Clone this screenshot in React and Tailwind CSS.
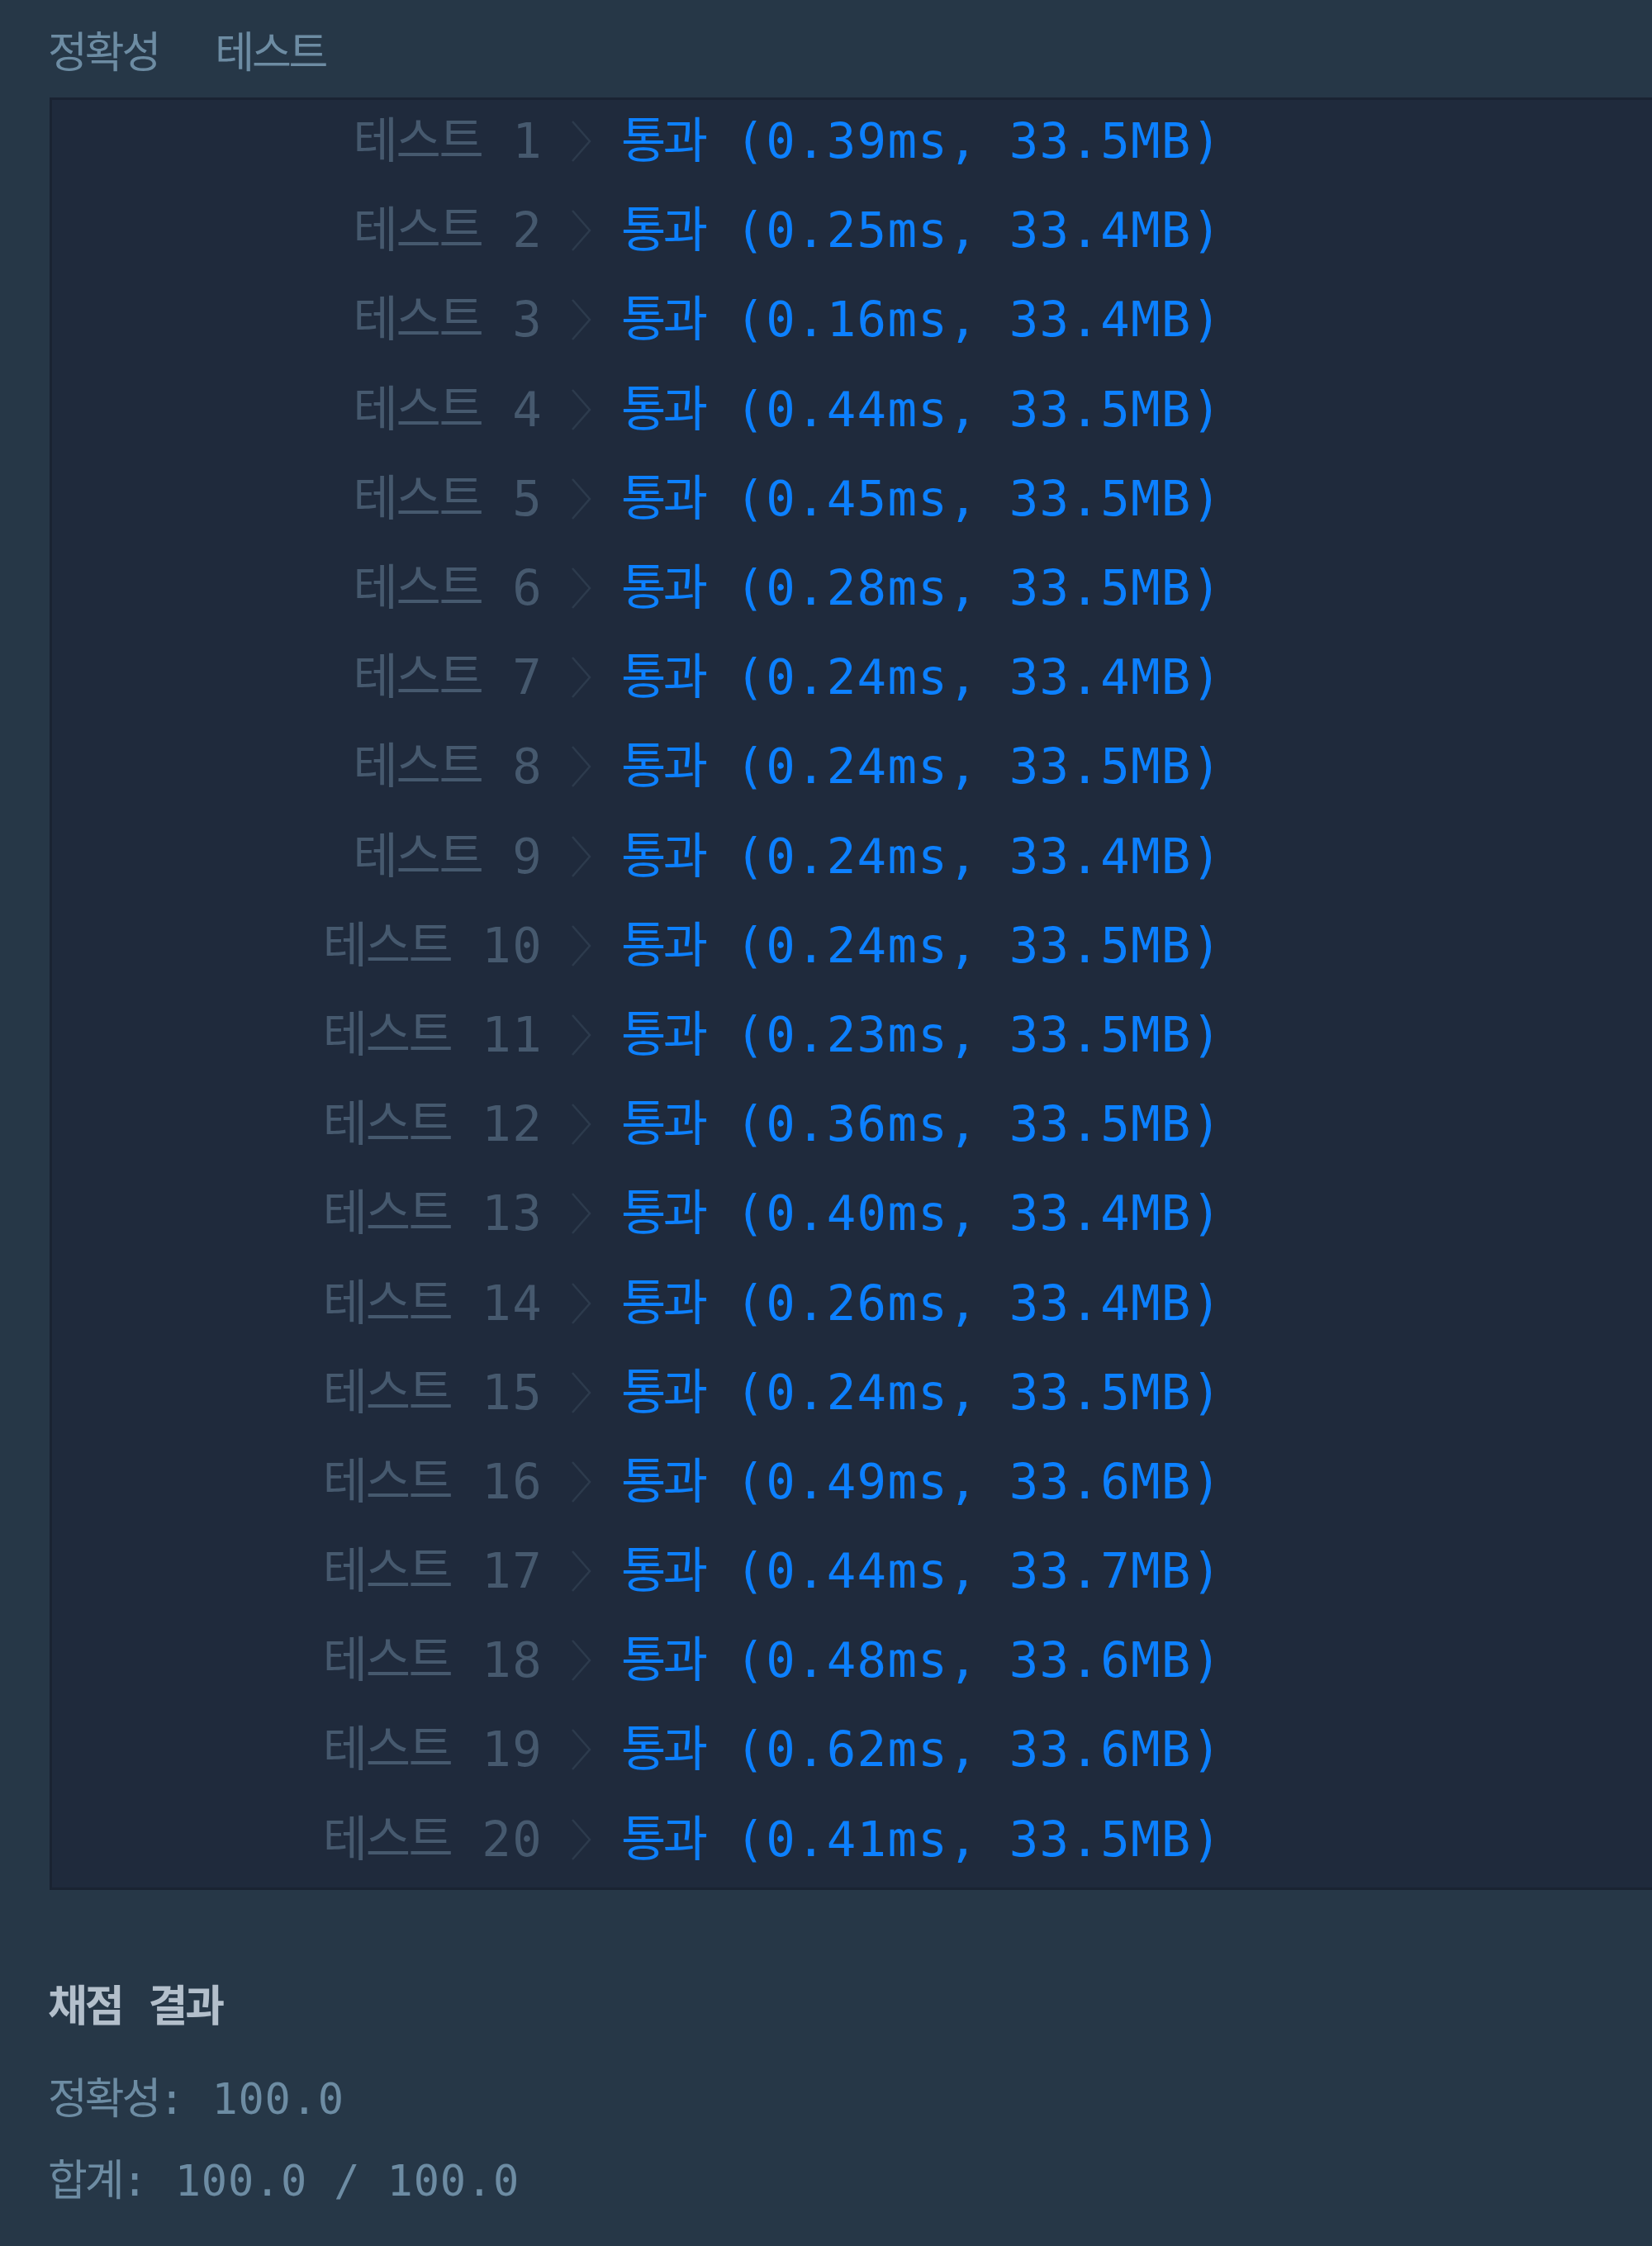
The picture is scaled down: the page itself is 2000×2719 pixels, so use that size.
const results = [
  ['0.39', '33.5'], ['0.25', '33.4'], ['0.16', '33.4'], ['0.44', '33.5'],
  ['0.45', '33.5'], ['0.28', '33.5'], ['0.24', '33.4'], ['0.24', '33.5'],
  ['0.24', '33.4'], ['0.24', '33.5'], ['0.23', '33.5'], ['0.36', '33.5'],
  ['0.40', '33.4'], ['0.26', '33.4'], ['0.24', '33.5'], ['0.49', '33.6'],
  ['0.44', '33.7'], ['0.48', '33.6'], ['0.62', '33.6'], ['0.41', '33.5'],
];

// hangul comes from the CJK fallback, which runs wider than the reference
function Ko({ children, className = 'tracking-[-0.06em]' }) {
  return <span className={className}>{children}</span>;
}

function Chevron() {
  return (
    <svg width="26" height="52" viewBox="0 0 26 52" className="shrink-0 ml-[34px]">
      <polyline points="2,2 23,26 2,50" fill="none" stroke="#2d3b4d" strokeWidth="2.5" strokeLinejoin="miter" />
    </svg>
  );
}

export default function App() {
  return (
    <div
      className="min-h-screen w-full overflow-hidden bg-[#263747] pb-[60px]"
      style={{ fontFamily: '"DejaVu Sans Mono", "Noto Sans CJK KR", monospace' }}
    >
      {/* tabs header */}
      <div className="pl-[58px] pt-[34px] text-[52px] leading-[60px] text-[#6d8ca3]">
        <Ko>정확성</Ko>
        <span className="ml-[68px]"><Ko>테스트</Ko></span>
      </div>

      {/* test result console */}
      <div className="ml-[60px] mt-[24px] bg-[#1f2a3c] border-y-[3px] border-l-[3px] border-[#1a2332]">
        {results.map(([ms, mb], i) => (
          <div key={i} className="flex items-center h-[108.2px] pb-[8px] text-[59px] leading-[100px] tracking-[1.3px] whitespace-pre">
            <div className="w-[594px] text-right text-[#46596e]">
              <Ko className="tracking-[-0.04em]">테스트</Ko> {i + 1}
            </div>
            <Chevron />
            <div className="ml-[35px] text-[#0c80ff]">
              <Ko>통과</Ko> ({ms}ms, {mb}MB)
            </div>
          </div>
        ))}
      </div>

      {/* summary */}
      <div className="pl-[58px] mt-[111px] text-[52px] leading-[60px] tracking-[0.8px] whitespace-pre">
        <div className="font-bold text-[#b3bfcb]">
          <Ko>채점</Ko> <Ko>결과</Ko>
        </div>
        <div className="mt-[52px] text-[#6d8ca3]">
          <Ko>정확성</Ko>: 100.0
        </div>
        <div className="mt-[39px] text-[#6d8ca3]">
          <Ko>합계</Ko>: 100.0 / 100.0
        </div>
      </div>
    </div>
  );
}
